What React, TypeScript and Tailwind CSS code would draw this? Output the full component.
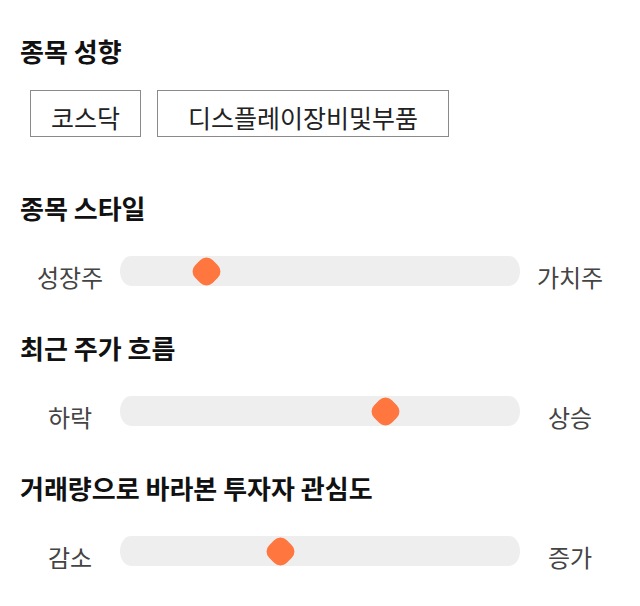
import React from 'react';

interface SliderRow {
  title: string;
  left: string;
  right: string;
  value: number;
}

const sliders: SliderRow[] = [
  { title: '종목 스타일', left: '성장주', right: '가치주', value: 19.5 },
  { title: '최근 주가 흐름', left: '하락', right: '상승', value: 67.5 },
  { title: '거래량으로 바라본 투자자 관심도', left: '감소', right: '증가', value: 39.5 },
];

const tags = [
  { label: '코스닥', pad: 'px-5' },
  { label: '디스플레이장비및부품', pad: 'px-[30px]' },
];

function Slider({ row }: { row: SliderRow }) {
  const v = row.value / 100;
  return (
    <section>
      <h2 className="px-5 text-[26px] leading-8 font-bold text-[#111]">{row.title}</h2>
      <div className="mt-[31px] flex h-8 items-center">
        <span className="w-[120px] pl-5 pt-3 text-center text-[24px] text-[#444]">{row.left}</span>
        <div className="relative h-[30px] flex-1 rounded-[11px/15px] bg-[#eeeeee]">
          <div
            className="absolute top-0 flex h-[30px] w-7 items-center justify-center"
            style={{ left: `calc(${v * 100}% - ${v * 28}px)` }}
          >
            <div className="h-[25px] w-[25px] rotate-45 rounded-[9px] bg-[#ff763f]" />
          </div>
        </div>
        <span className="w-[120px] pr-5 pt-3 text-center text-[24px] text-[#444]">{row.right}</span>
      </div>
    </section>
  );
}

export default function App() {
  return (
    <main className="min-h-screen bg-white pt-[35px] font-['Noto_Sans_CJK_KR',sans-serif]">
      <h2 className="px-5 text-[26px] leading-8 font-bold text-[#111]">종목 성향</h2>
      <div className="mt-[23px] flex gap-4 pl-[30px]">
        {tags.map((tag) => (
          <div
            key={tag.label}
            className={`flex h-[47px] items-center border border-[#8a8a8a] pt-2 text-[25px] text-[#222] ${tag.pad}`}
          >
            {tag.label}
          </div>
        ))}
      </div>
      <div className="mt-[55px] flex flex-col gap-[45px]">
        {sliders.map((row) => (
          <Slider key={row.title} row={row} />
        ))}
      </div>
    </main>
  );
}
